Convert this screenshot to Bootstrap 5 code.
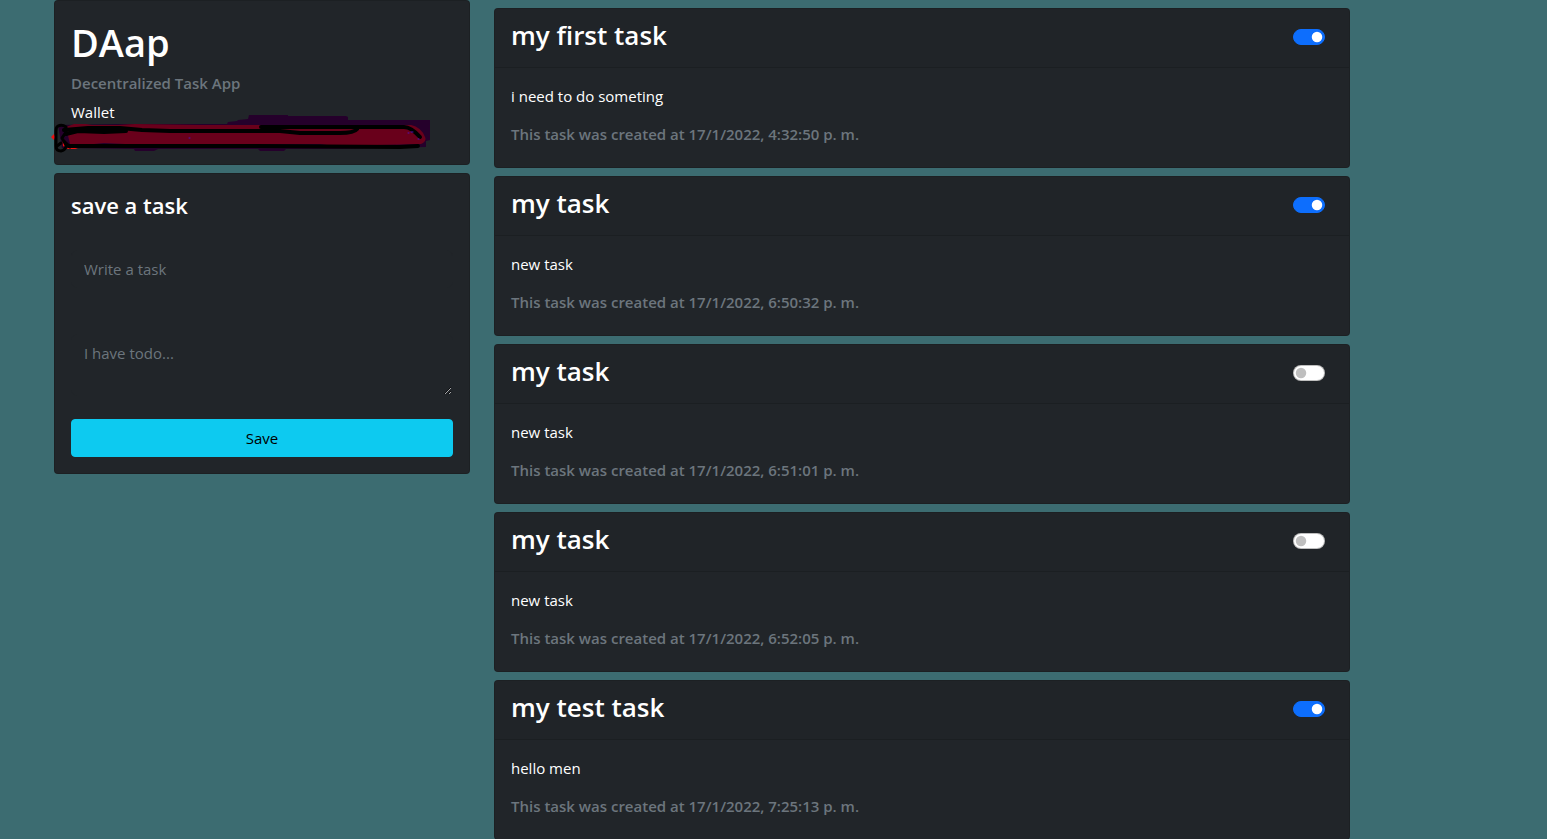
<!DOCTYPE html>
<html lang="en">
<head>
<meta charset="utf-8">
<meta name="viewport" content="width=device-width, initial-scale=1">
<title>DAap</title>
<link href="https://cdn.jsdelivr.net/npm/bootstrap@5.3.0/dist/css/bootstrap.min.css" rel="stylesheet">
<style>
body { background: #3c6c71; font-family: "Open Sans", "Noto Sans", sans-serif; font-size: 15px; line-height: 24px; }
h1, h2, h3, h4 { font-weight: 600; }
.card { --bs-card-border-radius: 4px; --bs-card-inner-border-radius: 3px; --bs-card-bg: #212529; --bs-card-border-color: rgba(0,0,0,.125); color: #fff; }
.app-title { font-size: 38px; line-height: 50px; margin-bottom: 6px; }
.form-title { font-size: 22px; line-height: 31px; margin-bottom: 29px; }
.task-title { font-size: 26px; line-height: 36px; margin-bottom: 6px; }
.muted-line { font-size: 15px; line-height: 21px; margin-bottom: 6px; color: #6c757d; }
.task-field, .task-field:focus { font-size: 15px; line-height: 24px; background: #212529; border-color: #212529; color: #fff; }
.task-field::placeholder { color: #6c757d; }
.name-field { margin-bottom: 46px; }
.note-field { margin-bottom: 23px; }
.save-btn { border-radius: 4px; font-size: 15px; line-height: 24px; background: #0dcaf0; }
.form-check { font-size: 16px; min-height: 24px; margin-bottom: 2px; }
.form-switch .form-check-input { background-color: #fff; border-color: rgba(0,0,0,.25); }
.form-switch .form-check-input:checked { background-color: #0d6efd; border-color: #0d6efd; }
.wallet-line { height: 24px; }
.wallet-mark { position: absolute; left: -23px; top: -12px; }
@media (min-width: 1500px) { .app-shell { padding-right: 143px; } }
</style>
</head>
<body>
<div class="app-shell">
<main class="container">
<div class="row">
  <div class="col-md-4">
    <section class="card">
      <div class="card-body">
        <h1 class="app-title">DAap</h1>
        <h4 class="muted-line">Decentralized Task App</h4>
        <div>Wallet</div>
        <div class="wallet-line position-relative">
          <svg class="wallet-mark" width="388" height="44" viewBox="48 112 388 44" fill="none" stroke-linecap="round" stroke-linejoin="round" aria-hidden="true">
            <path fill="#25002b" d="M58 125L120 124L227 124L228 122L237 121L238 120L248 119L249 115H288V116H346L348 117V120H430V140L426 141V147L340 149L286 149L284 151H260L258 149H158L154 151H135L134 149L62 148Z"/>
            <path fill="#69001b" d="M66 127L74 124L86 124L92 125H118L135 124L200 125H411Q421 127 425 137Q427 141 421 144L334 146L320 144H125L104 143L84 145L70 144Z"/>
            <path fill="#f01010" d="M51 137L54 134L55 137L54 140ZM62 137L70 146L78 149H68L63 146Z"/>
            <g stroke="#000" stroke-width="4">
              <path d="M68 146H250L400 147L418 146"/>
              <path d="M64 130L88 128L120 128L142 130L170 131H280L300 133H340Q354 133 357 129"/>
              <path d="M66 134L78 131L104 132L126 131"/>
              <path d="M261 127H404Q411 127 420 137"/>
              <path d="M66 127Q62 124 58 126Q56 127 56 131V146Q56 151 61 151Q66 150 66 145L62 138L66 132Z" stroke-width="3"/>
              <path d="M57 146L61 143M64 141L70 147" stroke-width="3"/>
            </g>
            <path stroke="#4d13bc" d="M408 133h1M411 132h2M418 139h1M189 138h1"/>
          </svg>
        </div>
      </div>
    </section>
    <section class="card mt-2">
      <form class="card-body">
        <h4 class="form-title">save a task</h4>
        <input type="text" class="form-control task-field name-field" placeholder="Write a task" aria-label="Task title">
        <textarea class="form-control task-field note-field" rows="2" placeholder="I have todo..." aria-label="Task description"></textarea>
        <button type="button" class="btn btn-info w-100 save-btn">Save</button>
      </form>
    </section>
  </div>
  <div class="col-md-8">
    <article class="card mt-2">
      <div class="card-header d-flex justify-content-between align-items-center">
        <h3 class="task-title">my first task</h3>
        <div class="form-check form-switch"><input class="form-check-input" type="checkbox" role="switch" aria-label="my first task done" checked></div>
      </div>
      <div class="card-body">
        <p>i need to do someting</p>
        <h4 class="muted-line">This task was created at 17/1/2022, 4:32:50 p. m.</h4>
      </div>
    </article>
    <article class="card mt-2">
      <div class="card-header d-flex justify-content-between align-items-center">
        <h3 class="task-title">my task</h3>
        <div class="form-check form-switch"><input class="form-check-input" type="checkbox" role="switch" aria-label="my task done" checked></div>
      </div>
      <div class="card-body">
        <p>new task</p>
        <h4 class="muted-line">This task was created at 17/1/2022, 6:50:32 p. m.</h4>
      </div>
    </article>
    <article class="card mt-2">
      <div class="card-header d-flex justify-content-between align-items-center">
        <h3 class="task-title">my task</h3>
        <div class="form-check form-switch"><input class="form-check-input" type="checkbox" role="switch" aria-label="my task done"></div>
      </div>
      <div class="card-body">
        <p>new task</p>
        <h4 class="muted-line">This task was created at 17/1/2022, 6:51:01 p. m.</h4>
      </div>
    </article>
    <article class="card mt-2">
      <div class="card-header d-flex justify-content-between align-items-center">
        <h3 class="task-title">my task</h3>
        <div class="form-check form-switch"><input class="form-check-input" type="checkbox" role="switch" aria-label="my task done"></div>
      </div>
      <div class="card-body">
        <p>new task</p>
        <h4 class="muted-line">This task was created at 17/1/2022, 6:52:05 p. m.</h4>
      </div>
    </article>
    <article class="card mt-2">
      <div class="card-header d-flex justify-content-between align-items-center">
        <h3 class="task-title">my test task</h3>
        <div class="form-check form-switch"><input class="form-check-input" type="checkbox" role="switch" aria-label="my test task done" checked></div>
      </div>
      <div class="card-body">
        <p>hello men</p>
        <h4 class="muted-line">This task was created at 17/1/2022, 7:25:13 p. m.</h4>
      </div>
    </article>
  </div>
</div>
</main>
</div>
<script src="https://cdn.jsdelivr.net/npm/bootstrap@5.3.0/dist/js/bootstrap.bundle.min.js"></script>
</body>
</html>
